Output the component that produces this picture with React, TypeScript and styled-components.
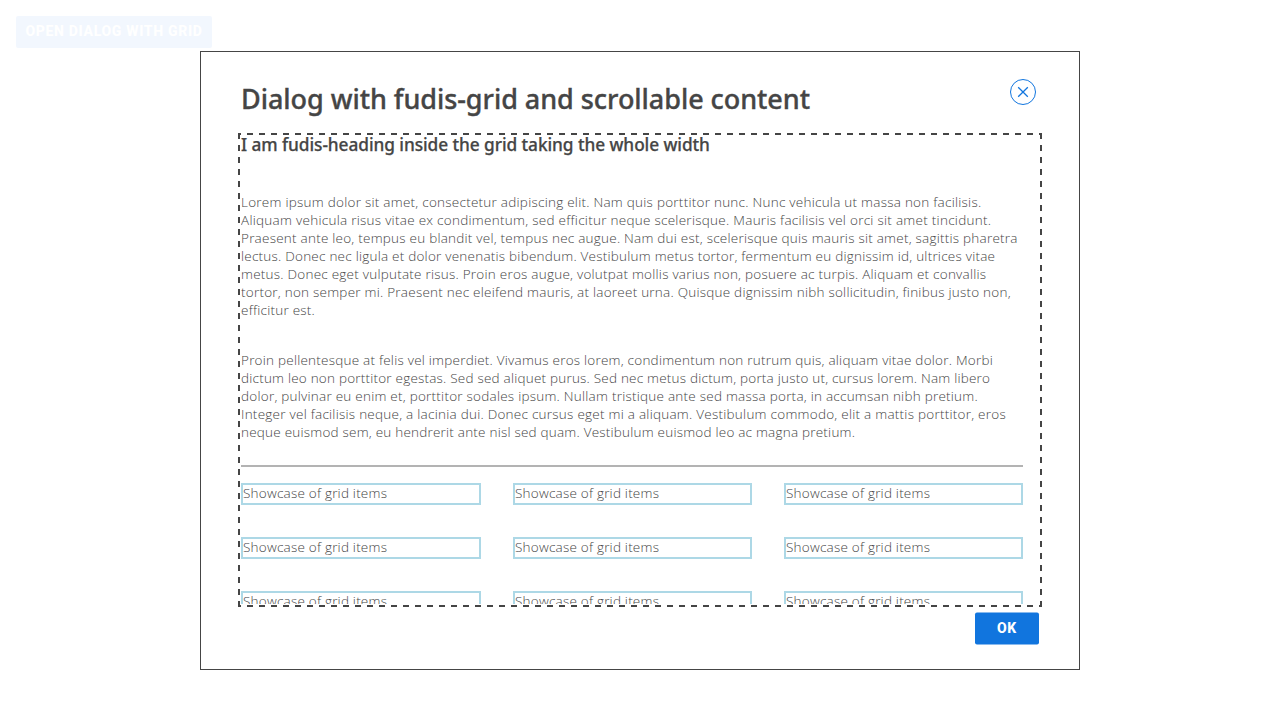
import React from 'react';
import styled, { createGlobalStyle } from 'styled-components';

const ink = '#454545';
const blue = '#1175de';

const GlobalStyle = createGlobalStyle`
  *, *::before, *::after { box-sizing: border-box; }
  body {
    margin: 0;
    background: #fff;
    color: ${ink};
    font-family: 'Open Sans', 'Noto Sans', sans-serif;
  }
`;

const Page = styled.main`
  display: flex;
  flex-direction: column;
  align-items: center;
  height: 720px;
  padding-top: 16px;
  overflow: hidden;
`;

const Button = styled.button<{ $width: number; $faded?: boolean }>`
  flex: none;
  width: ${p => p.$width}px;
  height: 32px;
  padding: 0 0 1px;
  border: 0;
  border-radius: 2px;
  background: ${p => (p.$faded ? '#f2f7fe' : blue)};
  color: #fff;
  font: 800 14px/31px Roboto, sans-serif;
  letter-spacing: 0.68px;
  text-transform: uppercase;
  white-space: nowrap;
`;

const OpenButton = styled(Button)`
  align-self: flex-start;
  margin-left: 16px;
`;

const Dialog = styled.section`
  display: flex;
  flex-direction: column;
  width: 880px;
  height: 619px;
  margin-top: 3px;
  padding: 27px 37px 24px;
  border: 1px solid ${ink};
  background: #fff;
`;

const Header = styled.header`
  display: flex;
  justify-content: space-between;
  align-items: flex-start;
  height: 54px;
  padding: 0 6px 0 3px;
`;

const Title = styled.h1`
  margin: 2px 0 0;
  font: 500 27px/36px 'Noto Sans', sans-serif;
  letter-spacing: -0.05px;
  -webkit-text-stroke: 0.35px ${ink};
`;

const CloseButton = styled.button`
  display: flex;
  width: 26px;
  height: 26px;
  padding: 0;
  border: 0;
  background: none;
`;

const dashesX = `repeating-linear-gradient(90deg, ${ink} 0 3px, transparent 3px 9px, ${ink} 9px 12px)`;
const dashesY = `repeating-linear-gradient(180deg, ${ink} 0 6px, transparent 6px 12px)`;

const Frame = styled.div`
  height: 474px;
  padding: 3px;
  background:
    ${dashesX} 0 0 / 100% 2px no-repeat,
    ${dashesX} 0 100% / 100% 2px no-repeat,
    ${dashesY} 0 0 / 2px 100% no-repeat,
    ${dashesY} 100% 0 / 2px 100% no-repeat;
`;

const Content = styled.div`
  height: 468px;
  padding-right: 16px;
  overflow: hidden;
`;

const Heading = styled.h2`
  height: 57px;
  margin: 0;
  font: 500 17.3px/18px 'Noto Sans', sans-serif;
  letter-spacing: -0.075px;
  -webkit-text-stroke: 0.25px ${ink};
`;

const Paragraph = styled.p`
  margin: 0 0 32px;
  font-size: 13.5px;
  font-weight: 300;
  line-height: 18px;
`;

const Line = styled.span<{ $tracking: number }>`
  display: block;
  letter-spacing: ${p => p.$tracking}px;
  white-space: nowrap;
`;

const Rule = styled.hr`
  height: 2px;
  margin: -8px 0 16px;
  border: 0;
  background: #b3b3b3;
`;

const Grid = styled.div`
  display: grid;
  grid-template-columns: 240px 239px 239px;
  gap: 32px;
`;

const Item = styled.div`
  height: 22px;
  border: 2px solid lightblue;
  font-size: 13.5px;
  font-weight: 300;
  line-height: 17px;
  letter-spacing: 0.22px;
  white-space: nowrap;
`;

const Footer = styled.footer`
  display: flex;
  justify-content: flex-end;
  padding: 6px 3px 0 0;
`;

const ConfirmButton = styled(Button)`
  transform: translateY(-0.5px);
`;

type TextLine = [text: string, tracking: number];

const first: TextLine[] = [
  ['Lorem ipsum dolor sit amet, consectetur adipiscing elit. Nam quis porttitor nunc. Nunc vehicula ut massa non facilisis.', 0.252],
  ['Aliquam vehicula risus vitae ex condimentum, sed efficitur neque scelerisque. Mauris facilisis vel orci sit amet tincidunt.', 0.272],
  ['Praesent ante leo, tempus eu blandit vel, tempus nec augue. Nam dui est, scelerisque quis mauris sit amet, sagittis pharetra', 0.236],
  ['lectus. Donec nec ligula et dolor venenatis bibendum. Vestibulum metus tortor, fermentum eu dignissim id, ultrices vitae', 0.233],
  ['metus. Donec eget vulputate risus. Proin eros augue, volutpat mollis varius non, posuere ac turpis. Aliquam et convallis', 0.239],
  ['tortor, non semper mi. Praesent nec eleifend mauris, at laoreet urna. Quisque dignissim nibh sollicitudin, finibus justo non,', 0.24],
  ['efficitur est.', 0.234],
];

const second: TextLine[] = [
  ['Proin pellentesque at felis vel imperdiet. Vivamus eros lorem, condimentum non rutrum quis, aliquam vitae dolor. Morbi', 0.231],
  ['dictum leo non porttitor egestas. Sed sed aliquet purus. Sed nec metus dictum, porta justo ut, cursus lorem. Nam libero', 0.215],
  ['dolor, pulvinar eu enim et, porttitor sodales ipsum. Nullam tristique ante sed massa porta, in accumsan nibh pretium.', 0.242],
  ['Integer vel facilisis neque, a lacinia dui. Donec cursus eget mi a aliquam. Vestibulum commodo, elit a mattis porttitor, eros', 0.252],
  ['neque euismod sem, eu hendrerit ante nisl sed quam. Vestibulum euismod leo ac magna pretium.', 0.22],
];

function Copy({ lines }: { lines: TextLine[] }) {
  return (
    <Paragraph>
      {lines.map(([text, tracking]) => (
        <Line key={text} $tracking={tracking}>{text}</Line>
      ))}
    </Paragraph>
  );
}

export default function App() {
  return (
    <Page>
      <GlobalStyle />
      <OpenButton $width={196} $faded>Open dialog with grid</OpenButton>
      <Dialog role="dialog">
        <Header>
          <Title>Dialog with fudis-grid and scrollable content</Title>
          <CloseButton aria-label="Close">
            <svg width="26" height="26" viewBox="0 0 26 26" fill="none" stroke={blue}>
              <circle cx="13" cy="13" r="12.5" />
              <path d="M8.2 8.2l9.6 9.6M17.8 8.2l-9.6 9.6" strokeWidth="1.3" />
            </svg>
          </CloseButton>
        </Header>
        <Frame>
          <Content>
            <Heading>I am fudis-heading inside the grid taking the whole width</Heading>
            <Copy lines={first} />
            <Copy lines={second} />
            <Rule />
            <Grid>
              {Array.from({ length: 9 }, (_, i) => (
                <Item key={i}>Showcase of grid items</Item>
              ))}
            </Grid>
          </Content>
        </Frame>
        <Footer>
          <ConfirmButton $width={64}>OK</ConfirmButton>
        </Footer>
      </Dialog>
    </Page>
  );
}
